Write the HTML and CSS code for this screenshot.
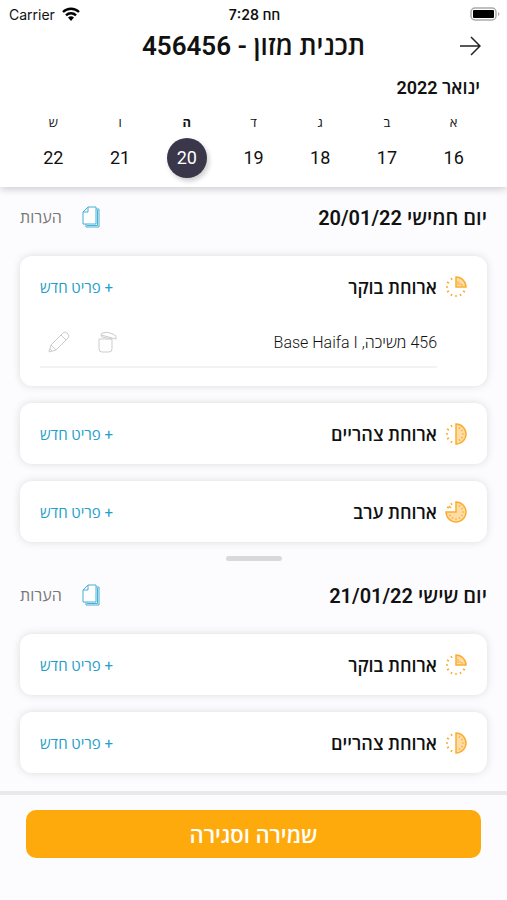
FILE: index.html
```
<!DOCTYPE html>
<html lang="he" dir="rtl">
<head>
  <meta charset="UTF-8" />
  <meta name="viewport" content="width=device-width, initial-scale=1.0"/>
  <title>תכנית מזון</title>
  <link rel="stylesheet" href="styles.css">
</head>
<body>
  <!-- shared icons -->
  <svg class="sprite" aria-hidden="true">
    <symbol id="icon-pages" viewBox="0 0 18 22">
      <path d="M6 1h8v17H1V6z M1 6h5V1" fill="#fff"/>
      <path d="M14 3h3v18H4v-3 M15.5 4v15.5H5" fill="none"/>
    </symbol>
    <symbol id="icon-morning" viewBox="0 0 22 22">
      <path class="slice" d="M11 1a10 10 0 0 1 10 10H11z"/>
      <path class="ticks" d="M11 19v2M15 18l1 2M18 15l2 1M7 18l-1 2M4 15l-2 1M3 11H1M4 7L2 6M7 4L6 2"/>
      <path class="marks" d="M13 5v4M15 7v2M17 8v2"/>
    </symbol>
    <symbol id="icon-noon" viewBox="0 0 22 22">
      <path class="slice" d="M11 1a10 10 0 0 1 0 20z"/>
      <path class="ticks" d="M7 18l-1 2M4 15l-2 1M3 11H1M4 7L2 6M7 4L6 2"/>
      <path class="marks" d="M15 4l-1 2M18 7l-2 1M19 11h-2M18 15l-2-1M15 18l-1-2"/>
    </symbol>
    <symbol id="icon-evening" viewBox="0 0 22 22">
      <path class="slice" d="M11 1a10 10 0 1 1-10 10h10z"/>
      <path class="ticks" d="M4 7L2 6M7 4L6 2M6 7L4 5"/>
      <path class="marks" d="M15 4l-1 2M18 7l-2 1M19 11h-2M18 15l-2-1M15 18l-1-2M11 19v-2M7 18l1-2M4 15l2-1"/>
    </symbol>
  </svg>

  <header class="header">
    <div class="status-bar" dir="ltr">
      <div class="carrier">
        <span>Carrier</span>
        <svg class="wifi" viewBox="0 0 18 14"><path d="M1 5a11.500 11.500 0 0 1 16 0M4 8.300a7 7 0 0 1 10 0" fill="none" stroke="#000" stroke-width="2.400"/><path d="M6 10.600a4.300 4.300 0 0 1 6 0L9 14z"/></svg>
      </div>
      <span class="time">7:28 חח</span>
      <div class="battery-wrap">
        <svg class="battery" viewBox="0 0 30 14"><rect x="1" y="1" width="25" height="12" rx="4" fill="#fff" stroke="#aaa" stroke-width="1.500"/><rect x="3" y="3" width="21" height="8" rx="1"/><path d="M28 5c2 1 2 3 0 4z" fill="#aaa"/></svg>
      </div>
    </div>
    <div class="title-bar">
      <button class="back" aria-label="חזרה"><svg viewBox="0 0 22 20"><path d="M1 10h20M12 1l9 9-9 9"/></svg></button>
      <h1>תכנית מזון - 456456</h1>
    </div>
    <div class="month">ינואר 2022</div>
    <div class="week">
      <button class="day"><span>א</span><b>16</b></button>
      <button class="day"><span>ב</span><b>17</b></button>
      <button class="day"><span>ג</span><b>18</b></button>
      <button class="day"><span>ד</span><b>19</b></button>
      <button class="day active"><span>ה</span><b>20</b></button>
      <button class="day"><span>ו</span><b>21</b></button>
      <button class="day"><span>ש</span><b>22</b></button>
    </div>
  </header>

  <main class="plan">
    <section class="plan-day">
      <div class="day-header">
        <h2>יום חמישי 20/01/22</h2>
        <button class="icon-btn" aria-label="העתקה"><svg class="pages"><use href="#icon-pages"/></svg></button>
        <button class="notes">הערות</button>
      </div>
      <div class="card">
        <div class="meal">
          <svg class="meal-icon"><use href="#icon-morning"/></svg>
          <h3>ארוחת בוקר</h3>
          <button class="add">+ פריט חדש</button>
        </div>
        <div class="item">
          <span class="item-name">456 משיכה, Base Haifa I</span>
          <button class="icon-btn" aria-label="מחיקה"><svg class="tool" viewBox="0 0 22 22"><path d="M3 8h13v10a3 3 0 0 1-3 3H6a3 3 0 0 1-3-3zM5 4l15 4M5 4l1-2q5-2 11 1l3 2v3M5 4l1 2 10 2"/></svg></button>
          <button class="icon-btn" aria-label="עריכה"><svg class="tool" viewBox="0 0 22 22"><path d="M1 21l2-7L15 2q2-2 4 0l1 1q2 2 0 4L8 19zM3 14l5 5M2 18l2 2M13 4l5 5"/></svg></button>
        </div>
      </div>
      <div class="card">
        <div class="meal">
          <svg class="meal-icon"><use href="#icon-noon"/></svg>
          <h3>ארוחת צהריים</h3>
          <button class="add">+ פריט חדש</button>
        </div>
      </div>
      <div class="card">
        <div class="meal">
          <svg class="meal-icon"><use href="#icon-evening"/></svg>
          <h3>ארוחת ערב</h3>
          <button class="add">+ פריט חדש</button>
        </div>
      </div>
    </section>
    <div class="divider"></div>
    <section class="plan-day">
      <div class="day-header">
        <h2>יום שישי 21/01/22</h2>
        <button class="icon-btn" aria-label="העתקה"><svg class="pages"><use href="#icon-pages"/></svg></button>
        <button class="notes">הערות</button>
      </div>
      <div class="card">
        <div class="meal">
          <svg class="meal-icon"><use href="#icon-morning"/></svg>
          <h3>ארוחת בוקר</h3>
          <button class="add">+ פריט חדש</button>
        </div>
      </div>
      <div class="card">
        <div class="meal">
          <svg class="meal-icon"><use href="#icon-noon"/></svg>
          <h3>ארוחת צהריים</h3>
          <button class="add">+ פריט חדש</button>
        </div>
      </div>
    </section>
  </main>

  <footer class="footer">
    <button class="save">שמירה וסגירה</button>
  </footer>
</body>
</html>
```
FILE: styles.css
```
* { box-sizing: border-box; }

body {
  margin: 0;
  height: 100vh;
  display: flex;
  flex-direction: column;
  background-color: #fcfcfe;
  font-family: Roboto, "Open Sans", "Liberation Sans", sans-serif;
  color: #111;
}

h1, h2, h3 { margin: 0; font-weight: 600; }

button {
  background: none;
  border: none;
  padding: 0;
  font-family: inherit;
  color: inherit;
  cursor: pointer;
}

svg { display: block; }
.sprite { position: absolute; width: 0; height: 0; }

.header {
  background-color: #fff;
  box-shadow: 0 2px 8px rgba(0, 0, 0, 0.2);
  padding-bottom: 9px;
  z-index: 1;
}

.status-bar {
  display: grid;
  grid-template-columns: 1fr auto 1fr;
  align-items: center;
  height: 28px;
  padding: 0 7px 0 9px;
  font-family: Inter, "Open Sans", sans-serif;
  font-size: 14px;
}

.carrier { display: flex; align-items: center; gap: 7px; }
.wifi { width: 18px; height: 14px; }
.time { font-weight: 600; }
.battery-wrap { display: flex; justify-content: flex-end; }
.battery { width: 30px; height: 14px; }

.title-bar {
  display: grid;
  grid-template-columns: 22px 1fr 22px;
  align-items: center;
  height: 36px;
  padding: 0 26px;
}

.title-bar h1 { font-size: 26px; line-height: 36px; text-align: center; }
.back svg { width: 22px; height: 20px; fill: none; stroke: #222; stroke-width: 1.500; }

.month {
  height: 48px;
  line-height: 48px;
  padding: 0 27px;
  font-size: 18px;
  font-weight: 600;
}

.week {
  display: grid;
  grid-template-columns: repeat(7, 1fr);
  padding: 0 20px;
}

.day {
  display: flex;
  flex-direction: column;
  align-items: center;
  gap: 4px;
}

.day span { font-size: 13px; line-height: 22px; }

.day b {
  width: 40px;
  height: 40px;
  line-height: 40px;
  border-radius: 50%;
  font-size: 18px;
  font-weight: 400;
}

.day.active span { font-weight: 700; }

.day.active b {
  background-color: #3a374a;
  color: #fff;
  box-shadow: 2px 3px 5px rgba(0, 0, 0, 0.2);
}

.plan {
  flex: 1;
  min-height: 0;
  overflow: hidden;
  padding: 8px 20px;
}

.day-header {
  display: flex;
  align-items: center;
  height: 44px;
}

.day-header h2 { flex: 1; font-size: 20px; }
.pages { width: 18px; height: 22px; stroke: #46b0d5; }
.notes { margin-right: 20px; font-size: 16px; color: #777; }

.card {
  display: flow-root;
  margin-top: 17px;
  padding: 0 20px;
  background-color: #fff;
  border-radius: 12px;
  box-shadow: 0 0 9px rgba(0, 0, 0, 0.13);
}

.meal {
  display: flex;
  align-items: center;
  gap: 8px;
  height: 61px;
}

.meal h3 { flex: 1; font-size: 18px; }
.meal-icon { width: 22px; height: 22px; fill: none; stroke: #f9ae32; stroke-width: 1.500; }
.slice { fill: #ffdca3; }
.marks { stroke-width: 1; }
.add { font-size: 15px; color: #239fc9; }

.item {
  display: flex;
  align-items: center;
  gap: 26px;
  height: 51px;
  margin-right: 30px;
  padding-left: 8px;
  border-bottom: 2px solid #f3f3f4;
}

.item-name { flex: 1; font-size: 16px; font-weight: 300; }
.tool { width: 22px; height: 22px; fill: none; stroke: #ccc; }
.item:last-child { margin-bottom: 18px; }

.divider {
  width: 56px;
  height: 5px;
  margin: 14px auto 12px;
  border-radius: 3px;
  background-color: #d9d9dc;
}

.footer {
  padding: 15px 26px 42px;
  border-top: 4px solid #e9e9eb;
  background-color: #fcfcfe;
}

.save {
  display: block;
  width: 100%;
  height: 48px;
  border-radius: 10px;
  background-color: #ffaa0c;
  color: #fff;
  font-size: 22px;
  font-weight: 600;
}
```
